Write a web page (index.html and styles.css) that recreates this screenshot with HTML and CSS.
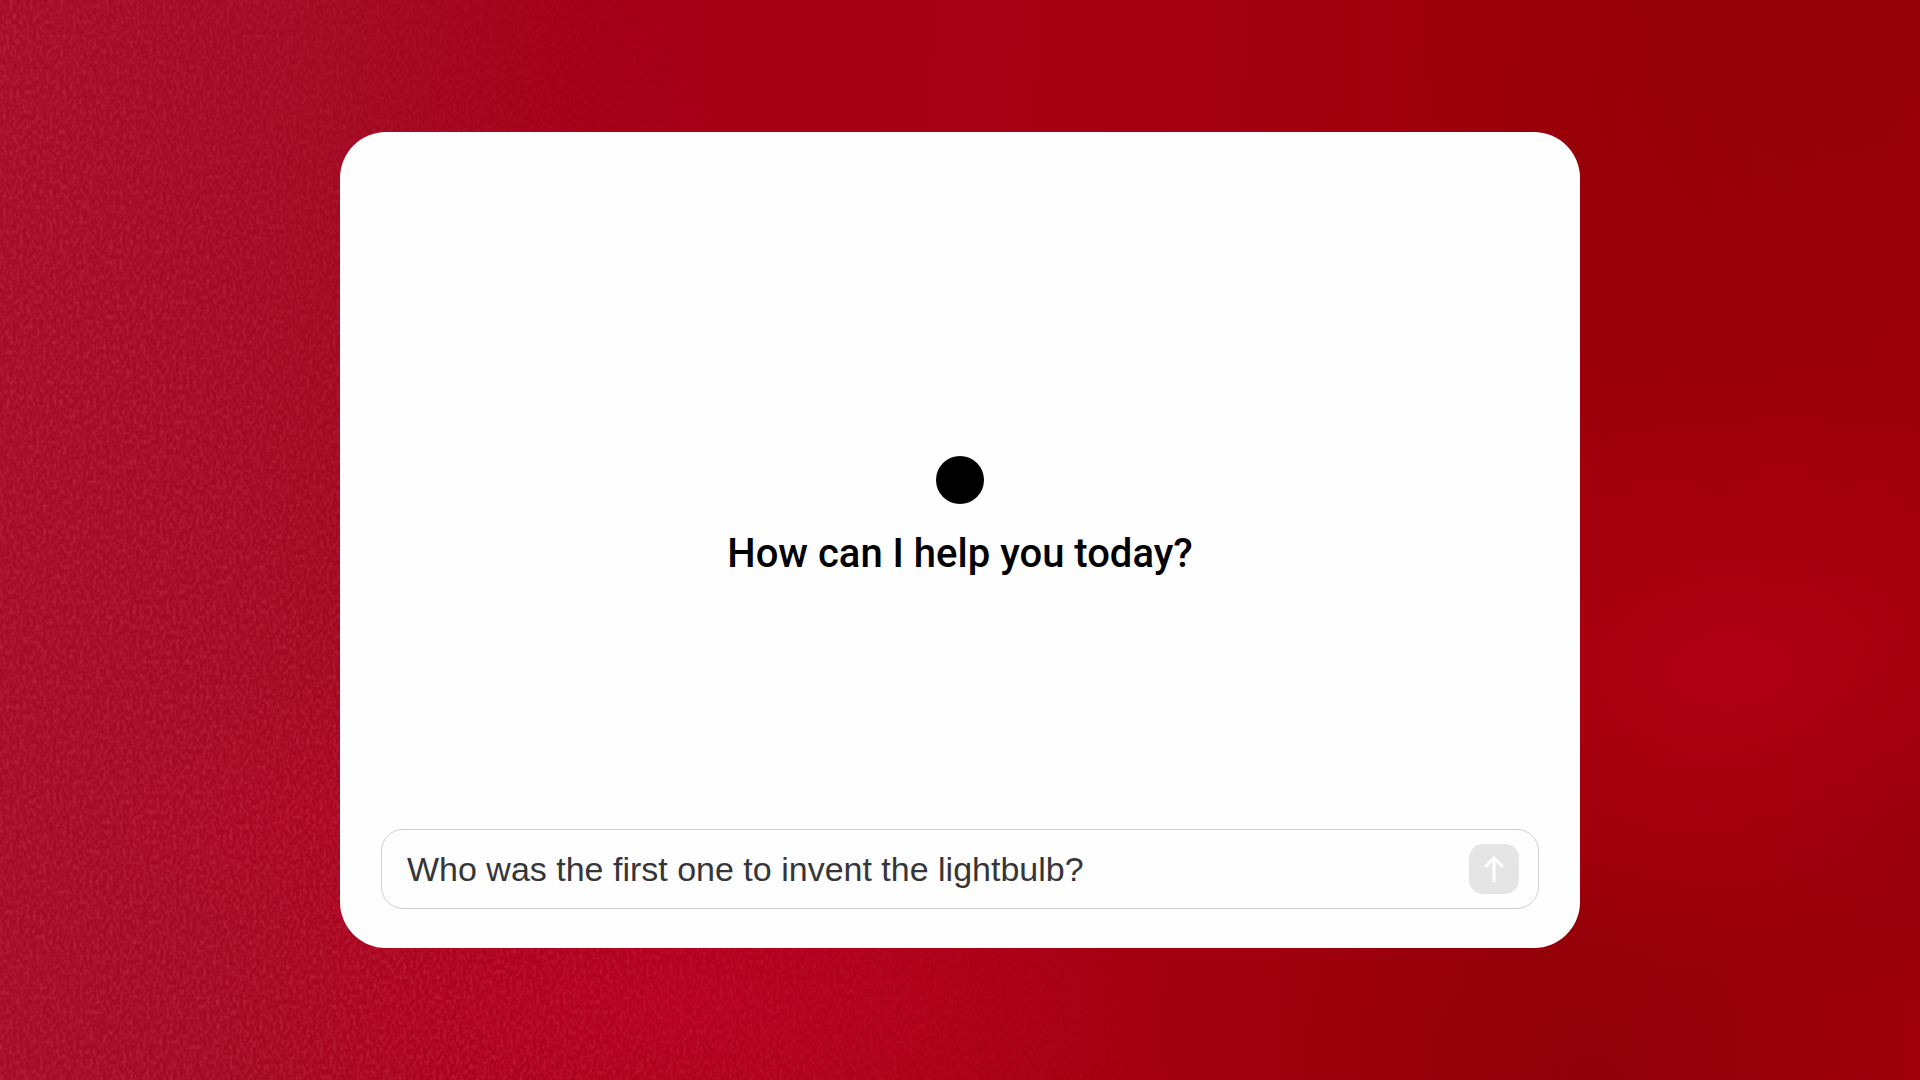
FILE: index.html
```html
<!DOCTYPE html>
<html lang="en">
<head>
    <meta charset="UTF-8">
    <meta name="viewport" content="width=device-width, initial-scale=1.0">
    <title>Assistant</title>
    <link rel="stylesheet" href="styles.css">
</head>
<body>
    <svg class="grain" aria-hidden="true">
        <filter id="noise" x="0" y="0" width="100%" height="100%">
            <feTurbulence type="fractalNoise" baseFrequency="0.3 0.2" numOctaves="2" seed="4"/>
            <feColorMatrix type="matrix" values="0 0 0 0 0.85  0 0 0 0 0.2  0 0 0 0 0.3  1.6 0 0 0 -0.6"/>
        </filter>
        <rect width="100%" height="100%" filter="url(#noise)"/>
    </svg>

    <main class="card">
        <div class="welcome">
            <span class="dot"></span>
            <h1>How can I help you today?</h1>
        </div>
        <form class="prompt" onsubmit="return false">
            <input type="text" class="prompt-input" aria-label="Message" value="Who was the first one to invent the lightbulb?">
            <button type="submit" class="send" aria-label="Send">
                <svg viewBox="0 0 24 28" width="24" height="28" fill="none" stroke="currentColor" stroke-width="3">
                    <path d="M12 27V3M3 12l9-9 9 9"/>
                </svg>
            </button>
        </form>
    </main>
</body>
</html>
```

FILE: styles.css
```css
* {
    box-sizing: border-box;
}
body {
    margin: 0;
    min-height: 100vh;
    display: flex;
    align-items: center;
    justify-content: center;
    padding: 40px;
    font-family: "Liberation Sans", Arial, sans-serif;
    background:
        radial-gradient(ellipse 26% 16% at 35% 93%, rgba(190, 0, 40, 0.7), transparent),
        radial-gradient(ellipse 16% 14% at 16% 76%, rgba(184, 4, 38, 0.4), transparent),
        radial-gradient(ellipse 24% 28% at 90% 62%, rgba(176, 0, 20, 0.9), transparent),
        radial-gradient(ellipse 18% 30% at 83% 100%, rgba(132, 0, 8, 0.5), transparent),
        radial-gradient(ellipse 12% 18% at 100% 76%, rgba(132, 0, 8, 0.5), transparent),
        radial-gradient(ellipse 24% 50% at 96% 0%, rgba(138, 0, 6, 0.5), transparent),
        linear-gradient(95deg, #a40c28 0%, #a20a24 14%, #a40018 30%, #a80014 50%, #9c0009 80%, #a0000c 100%);
}
/* paper texture, fades out to the right */
.grain {
    position: absolute;
    top: 0;
    left: 0;
    width: 100%;
    height: 100%;
    opacity: 0.28;
    -webkit-mask-image: linear-gradient(65deg, #000 20%, transparent 50%);
    mask-image: linear-gradient(65deg, #000 20%, transparent 50%);
}
.card {
    position: relative;
    display: flex;
    flex-direction: column;
    width: 100%;
    max-width: 1240px;
    min-height: 816px;
    padding: 39px 41px;
    background: #fefefe;
    border-radius: 46px;
}
.welcome {
    flex: 1;
    display: flex;
    flex-direction: column;
    align-items: center;
    justify-content: center;
    gap: 26px;
    padding-top: 34px;
}
.dot {
    width: 48px;
    height: 48px;
    border-radius: 50%;
    background: #000;
}
h1 {
    margin: 0;
    font-family: Roboto, sans-serif;
    font-size: 40px;
    line-height: 48px;
    font-weight: 500;
    color: #000;
}
.prompt {
    display: flex;
    align-items: center;
    gap: 16px;
    height: 80px;
    padding: 0 19px 0 25px;
    border: 1px solid #cfcfcf;
    border-radius: 22px;
}
.prompt-input {
    flex: 1;
    min-width: 0;
    padding: 0;
    border: none;
    outline: none;
    background: none;
    font-family: inherit;
    font-size: 34px;
    color: #36363a;
}
.send {
    display: flex;
    align-items: center;
    justify-content: center;
    width: 50px;
    height: 50px;
    padding: 0;
    border: none;
    border-radius: 14px;
    background: #e5e5e5;
    color: #fff;
    cursor: pointer;
}
```
